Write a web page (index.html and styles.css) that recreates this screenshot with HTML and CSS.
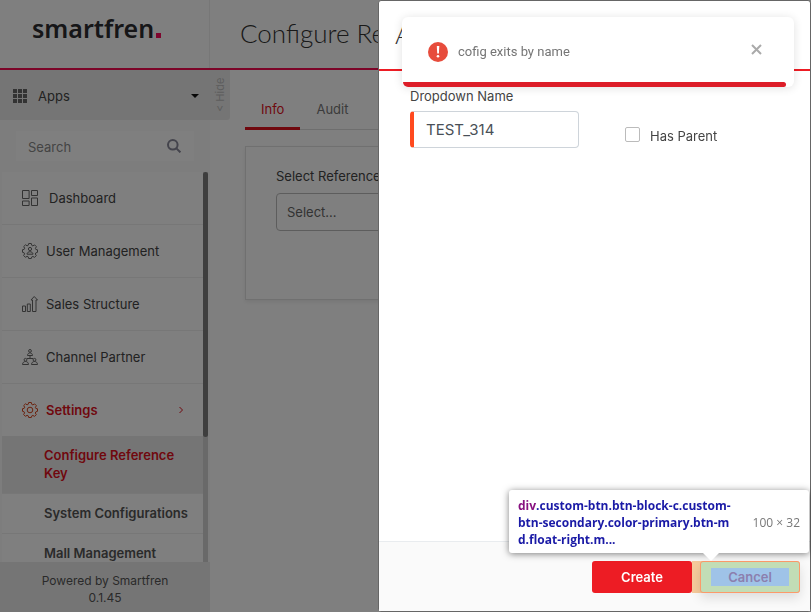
FILE: index.html
```html
<!DOCTYPE html>
<html lang="en">
<head>
<meta charset="utf-8">
<meta name="viewport" content="width=device-width, initial-scale=1">
<title>Configure Reference Key</title>
<link rel="stylesheet" href="styles.css">
</head>
<body>
<div class="app">
  <header class="topbar">
    <a class="logo" href="#">smartfren<span class="logo-dot"></span></a>
    <h1 class="page-title">Configure Reference Key</h1>
  </header>
  <div class="body">
    <aside class="sidebar">
      <button class="apps" type="button">
        <svg class="apps-icon" viewBox="0 0 14 14" width="14" height="14"><path d="M0 0h4v4H0zM5 0h4v4H5zM10 0h4v4h-4zM0 5h4v4H0zM5 5h4v4H5zM10 5h4v4h-4zM0 10h4v4H0zM5 10h4v4H5zM10 10h4v4h-4z"/></svg>
        <span>Apps</span>
        <svg class="caret" viewBox="0 0 8 4" width="8" height="4"><path d="M0 0h8L4 4z"/></svg>
      </button>
      <button class="hide-tab" type="button">&lt; Hide</button>
      <div class="search-wrap">
        <div class="search">
          <input type="search" placeholder="Search" aria-label="Search">
          <svg viewBox="0 0 14 14" width="14" height="14"><circle cx="5.8" cy="5.8" r="4.800"/><path d="M9.4 9.4l4 4"/></svg>
        </div>
      </div>
      <div class="menu">
        <nav class="menu-list">
          <a class="item item-dashboard" href="#">
            <svg viewBox="0 0 16 16" width="16" height="16"><path d="M.5.5h6.600v8H.5zM9.500.5h6v5h-6zM.5 11h6.600v4.500H.5zM9.500 8h6v7.500h-6z"/></svg>
            Dashboard</a>
          <a class="item" href="#">
            <svg viewBox="0 0 16 16" width="16" height="16"><path d="M6.700.5h2.600l.5 1.900 1.100.5 1.700-1 1.800 1.800-1 1.700.5 1.100 1.600.3v2.500l-1.700.6-.5 1.100 1 1.600-1.800 1.800-1.600-1-1.100.5-.5 1.600H6.700l-.5-1.700-1.100-.5-1.700 1-1.800-1.800 1-1.600-.5-1.100-1.600-.5V6.700l1.700-.4.5-1.100-1-1.600 1.800-1.800 1.600 1 1.100-.5z"/><circle cx="8" cy="6" r="1.600"/><path d="M5 11.200c0-3.300 6-3.300 6 0z"/></svg>
            User Management</a>
          <a class="item" href="#">
            <svg viewBox="0 0 16 16" width="16" height="16"><path d="M.5 10h3v5.500h-3zM5.300 8h3v7.500h-3zM10.500 15.500V4H9l3.200-3.500L15.500 4H14v11.500z"/></svg>
            Sales Structure</a>
          <a class="item" href="#">
            <svg viewBox="0 0 16 16" width="16" height="16"><circle cx="8" cy="1.900" r="1.400"/><path d="M5.500 6.500c0-3.500 5-3.500 5 0zM8 6.500v3M5 9.500h6"/><circle cx="3.500" cy="10.800" r="1.400"/><circle cx="12.500" cy="10.800" r="1.400"/><path d="M.5 15.500c0-4 6-4 6 0zM9.500 15.500c0-4 6-4 6 0z"/></svg>
            Channel Partner</a>
          <a class="item item-open" href="#">
            <svg viewBox="0 0 16 16" width="16" height="16"><path d="M6.700.5h2.600l.5 1.900 1.100.5 1.700-1 1.800 1.800-1 1.700.5 1.100 1.600.3v2.500l-1.700.6-.5 1.100 1 1.600-1.800 1.800-1.600-1-1.100.5-.5 1.600H6.700l-.5-1.700-1.100-.5-1.700 1-1.800-1.800 1-1.600-.5-1.100-1.600-.5V6.700l1.700-.4.5-1.100-1-1.600 1.800-1.800 1.600 1 1.100-.5z"/><circle cx="8" cy="8" r="2.800"/></svg>
            Settings
            <svg class="chevron" viewBox="0 0 4 8" width="4" height="8"><path d="M.5 1l3 3-3 3"/></svg></a>
          <a class="sub sub-active" href="#">Configure Reference Key</a>
          <a class="sub" href="#">System Configurations</a>
          <a class="sub" href="#">Mall Management</a>
        </nav>
        <div class="track"><div class="thumb"></div></div>
      </div>
      <footer class="powered">Powered by Smartfren<br>0.1.45</footer>
    </aside>
    <main class="content">
      <div class="tabs">
        <button class="tab tab-active" type="button">Info</button>
        <button class="tab" type="button">Audit</button>
      </div>
      <section class="card">
        <label for="ref">Select Reference Key</label>
        <select id="ref"><option>Select...</option></select>
      </section>
    </main>
  </div>
</div>

<div class="backdrop"></div>

<section class="drawer" role="dialog" aria-labelledby="drawer-title">
  <header class="drawer-head"><h2 id="drawer-title">Add</h2></header>
  <form class="drawer-body">
    <div class="field">
      <label for="name">Dropdown Name</label>
      <input id="name" type="text" value="TEST_314">
    </div>
    <label class="check"><input type="checkbox"><span>Has Parent</span></label>
  </form>
  <footer class="drawer-foot">
    <button class="btn btn-primary" type="button">Create</button>
    <div class="inspected">
      <button class="btn btn-secondary" type="button"><span>Cancel</span></button>
      <div class="tooltip">
        <div class="selector"><span class="tag">div</span>.custom-btn.btn-block-c.custom-<wbr>btn-secondary.color-primary.btn-m<wbr>d.float-right.m...</div>
        <div class="size">100 × 32</div>
      </div>
    </div>
  </footer>
</section>

<div class="toast" role="alert">
  <svg viewBox="0 0 20 20" width="20" height="20"><circle cx="10" cy="10" r="10" fill="#e74c3c"/><path d="M8.800 4h2.500l-.4 7.500H9.200z" fill="#fff"/><circle cx="10" cy="14.200" r="1.300" fill="#fff"/></svg>
  <span class="toast-text">cofig exits by name</span>
  <button class="close" type="button" aria-label="Close"><svg viewBox="0 0 11 11" width="11" height="11"><path d="M1 1l9 9M10 1l-9 9"/></svg></button>
  <div class="progress"></div>
</div>
</body>
</html>
```

FILE: styles.css
```css
* { box-sizing: border-box; }

body {
  margin: 0;
  font: 13px/18px Inter, "Open Sans", sans-serif;
  color: #444;
  background: #fff;
}

button, input, select { font: inherit; color: inherit; }
button { border: 0; padding: 0; background: none; }
a { color: inherit; text-decoration: none; }
h1, h2 { margin: 0; font: 300 26px/36px Lato, "Open Sans", sans-serif; color: #333; }

.app {
  display: flex;
  flex-direction: column;
  height: 100vh;
  overflow: hidden;
}

.topbar {
  display: flex;
  flex: none;
  height: 70px;
  border-bottom: 2px solid #f80a50;
}

.logo {
  display: flex;
  flex: none;
  align-items: baseline;
  width: 210px;
  padding: 11px 0 0 32px;
  border-right: 1px solid #eee;
  font: 600 25px/34px "Noto Sans", sans-serif;
  color: #2c2d30;
}
.logo-dot { width: 5px; height: 5px; margin-left: 2px; background: #fc0a5c; }

.page-title { padding: 15px 0 0 30px; white-space: nowrap; }

.body { display: flex; flex: 1; min-height: 0; }

.sidebar {
  position: relative;
  display: flex;
  flex: none;
  flex-direction: column;
  width: 210px;
  background: #fafafa;
}

.apps {
  display: flex;
  flex: none;
  align-items: center;
  gap: 11px;
  height: 50px;
  padding: 2px 11px 0 13px;
  background: #ebebeb;
}
.apps-icon { fill: #666; }
.caret { margin-left: auto; fill: #111; }

.hide-tab {
  position: absolute;
  top: 0;
  left: 210px;
  width: 20px;
  height: 50px;
  border-radius: 3px 0 0 0;
  background: #ebebeb;
  color: #bbb;
  font-size: 11px;
  writing-mode: vertical-rl;
  transform: rotate(180deg);
}

.search-wrap { flex: none; padding: 11px 16px; }
.search {
  display: flex;
  align-items: center;
  height: 30px;
  padding: 0 13px 0 12px;
  background: #fff;
}
.search input {
  flex: 1;
  min-width: 0;
  padding: 2px 0 0;
  border: 0;
  background: none;
  outline: 0;
}
.search input::placeholder { color: #888; }
.search svg { fill: none; stroke: #889; stroke-width: 2; }

.menu { display: flex; flex: 1; min-height: 0; padding: 0 2px; }
.menu-list { flex: 1; overflow: hidden; background: #fff; }

.item {
  display: flex;
  align-items: center;
  gap: 8px;
  height: 53px;
  padding: 0 20px;
  border-bottom: 1px solid #eee;
}
.item svg { flex: none; fill: none; stroke: #666; }
.item-dashboard { gap: 11px; }
.item-open { height: 52px; border-bottom: 0; font-weight: 600; color: #e0101c; }
.item-open svg { stroke: #d8441c; }
.item .chevron { margin-left: auto; stroke: #e0101c; }

.sub {
  display: block;
  padding: 10px 8px 11px 42px;
  border-bottom: 1px solid #eee;
  font-weight: 600;
  color: #555;
}
.sub-active { background: #ebebeb; color: #e0101c; }

.track { width: 5px; background: #d2d2d2; }
.thumb { height: 68%; border-radius: 3px; background: #7c7c7c; }

.powered {
  flex: none;
  padding: 10px 0 6px;
  background: #ebebeb;
  font-size: 12px;
  line-height: 17px;
  text-align: center;
  color: #555;
}

.content { flex: 1; min-width: 0; padding: 21px 15px; }
.tabs { display: flex; margin-left: 20px; border-bottom: 1px solid #ddd; }
.tab {
  height: 39px;
  margin-bottom: -1px;
  padding: 0 16px;
  border-bottom: 3px solid transparent;
  color: #777;
}
.tab-active { border-color: #e0101c; color: #e0101c; }

.card {
  display: flex;
  flex-direction: column;
  gap: 8px;
  min-height: 154px;
  margin: 16px 0 0 20px;
  padding: 20px 30px;
  border: 1px solid #e0e0e0;
  box-shadow: 0 2px 4px rgba(0, 0, 0, .08);
}
.card select {
  appearance: none;
  height: 38px;
  padding: 0 10px;
  border: 1px solid #bbb;
  border-radius: 4px;
  background: none;
  font-size: 13px;
  color: #666;
}

.backdrop { position: fixed; inset: 0; background: rgba(0, 0, 0, .5); }

.drawer {
  position: fixed;
  inset: 0 0 0 auto;
  display: flex;
  flex-direction: column;
  width: 433px;
  border: 1px solid #666;
  border-radius: 3px;
  background: #fff;
}
.drawer-head {
  height: 70px;
  padding: 15px 16px;
  border-bottom: 2px solid #ed1c24;
}

.drawer-body {
  display: flex;
  flex: 1;
  align-items: flex-start;
  gap: 46px;
  padding: 16px 31px;
}
.field { display: flex; flex-direction: column; gap: 6px; }
.field input {
  width: 169px;
  height: 37px;
  padding: 0 12px;
  border: 1px solid #ced4da;
  border-left: 4px solid #ff4a1f;
  border-radius: 4px;
  font-size: 15px;
  color: #495057;
}
.check { display: flex; align-items: flex-start; gap: 10px; padding-top: 40px; }
.check input {
  appearance: none;
  width: 15px;
  height: 15px;
  margin: 0;
  border: 1px solid #bbb;
  border-radius: 2px;
}

.drawer-foot {
  display: flex;
  justify-content: flex-end;
  height: 70px;
  padding: 19px 10px 18px;
  border-top: 1px solid #e9ecef;
  background: #fafafa;
}
.btn { width: 100px; height: 32px; border-radius: 3px; font-weight: 600; }
.btn-primary { background: #ed1c24; color: #fff; }

.inspected { position: relative; padding-left: 8px; background: #f6cb9c; border-radius: 0 3px 3px 0; }
.btn-secondary {
  padding: 6px 10px;
  border: 1px solid #fc9a6a;
  background: #c2ddb6;
  color: #8c7fae;
  box-shadow: 0 5px 12px rgba(0, 0, 0, .12);
}
.btn-secondary span { display: block; background: #9fc3e8; }

.tooltip {
  position: absolute;
  right: -9px;
  bottom: 40px;
  display: flex;
  align-items: center;
  gap: 8px;
  width: 300px;
  padding: 7px 9px 5px;
  border-radius: 3px;
  background: #fff;
  box-shadow: 0 1px 7px rgba(0, 0, 0, .5);
  font: 12px/17px "Open Sans", sans-serif;
}
.tooltip::after {
  content: "";
  position: absolute;
  top: 100%;
  left: 194px;
  border: 8px solid transparent;
  border-top-color: #fff;
  border-bottom: 0;
}
.selector { flex: 1; font-weight: 700; color: #1a1aa6; }
.tag { color: #881280; }
.size { flex: none; color: #777; }

.toast {
  position: fixed;
  top: 17px;
  right: 17px;
  display: flex;
  align-items: center;
  gap: 10px;
  width: 392px;
  height: 70px;
  padding: 0 32px 0 26px;
  border-radius: 6px;
  background: #fff;
  font-family: Roboto, sans-serif;
  color: #757575;
  box-shadow: 0 1px 10px rgba(0, 0, 0, .12);
}
.close { margin: 0 0 5px auto; line-height: 0; }
.close svg { stroke: #aaa; stroke-width: 2; }
.progress {
  position: absolute;
  left: 1px;
  right: 8px;
  bottom: 0;
  height: 5px;
  border-radius: 0 3px 3px 6px;
  background: #dd1d28;
}
```
